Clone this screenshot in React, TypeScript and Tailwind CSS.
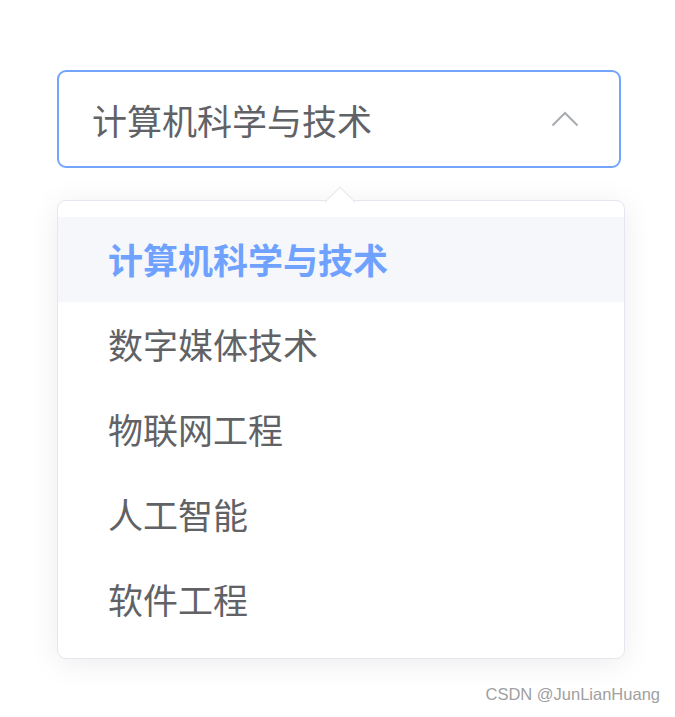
const OPTIONS = ['计算机科学与技术', '数字媒体技术', '物联网工程', '人工智能', '软件工程']

const SELECTED = 0

function ChevronUp() {
  return (
    <svg width="28" height="16" viewBox="0 0 28 16" fill="none" className="text-[#a8abb2]">
      <path d="M1.5 14.5 L14 2 L26.5 14.5" stroke="currentColor" strokeWidth="2" />
    </svg>
  )
}

export default function App() {
  return (
    <div
      className="relative h-[717px] w-[675px] overflow-hidden bg-white pl-[57px] pt-[70px]"
      style={{ fontFamily: '"Noto Sans CJK SC", "Noto Sans", sans-serif' }}
    >
      {/* Select input */}
      <div className="flex h-[98px] w-[564px] items-center justify-between rounded-[9px] border-2 border-[#74a5fc] pl-[33px] pr-[40px]">
        <span className="text-[35px] leading-none text-[#606266]">{OPTIONS[SELECTED]}</span>
        <ChevronUp />
      </div>

      {/* Dropdown */}
      <div className="relative mt-[32px] w-[568px] rounded-[9px] border border-[#e4e7ed] bg-white py-[16px] shadow-[0_4px_30px_rgba(0,0,0,0.08)]">
        <div className="absolute left-[271px] top-[-10px] h-[22px] w-[22px] rotate-45 border-l border-t border-[#e4e7ed] bg-white" />
        <ul className="relative">
          {OPTIONS.map((opt, i) => (
            <li
              key={opt}
              className={[
                'flex h-[85px] items-center pl-[50px] pb-[3px] text-[35px] leading-none',
                i === SELECTED ? 'bg-[#f5f7fa] font-bold text-[#6fa1ff]' : 'text-[#606266]',
              ].join(' ')}
            >
              {opt}
            </li>
          ))}
        </ul>
      </div>

      <div
        className="absolute bottom-[10px] right-[15px] text-[16.5px] text-[#a0a0a0]"
        style={{ fontFamily: '"Liberation Sans", Arial, sans-serif' }}
      >
        CSDN @JunLianHuang
      </div>
    </div>
  )
}
